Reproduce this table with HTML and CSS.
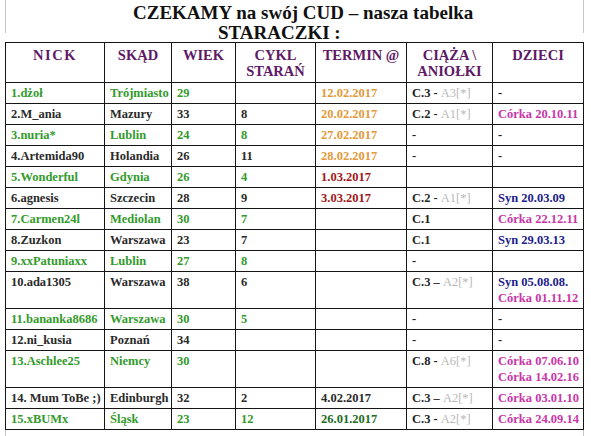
FILE: index.html
```html
<!DOCTYPE html>
<html lang="pl">
<head>
<meta charset="utf-8">
<title>CZEKAMY na swój CUD</title>
<link rel="stylesheet" href="styles.css">
</head>
<body>
<div class="page">
  <header class="title">
    <div class="title-line1">CZEKAMY na swój CUD – nasza tabelka</div>
    <div class="title-line2">STARACZKI :</div>
  </header>
  <table class="tab">
    <colgroup>
      <col class="c-nick"><col class="c-skad"><col class="c-wiek"><col class="c-cykl"><col class="c-termin"><col class="c-ciaza"><col class="c-dzieci">
    </colgroup>
    <thead>
      <tr>
        <th class="h-nick">NICK</th>
        <th>SKĄD</th>
        <th>WIEK</th>
        <th>CYKL<br>STARAŃ</th>
        <th>TERMIN @</th>
        <th>CIĄŻA \<br>ANIOŁKI</th>
        <th>DZIECI</th>
      </tr>
    </thead>
    <tbody>
      <tr class="g"><td>1.dżoł</td><td>Trójmiasto</td><td>29</td><td></td><td class="or">12.02.2017</td><td class="dk">C.3 - <span class="an">A3[*]</span></td><td class="dk">-</td></tr>
      <tr class="d"><td>2.M_ania</td><td>Mazury</td><td>33</td><td>8</td><td class="or">20.02.2017</td><td>C.2 - <span class="an">A1[*]</span></td><td class="pk">Córka 20.10.11</td></tr>
      <tr class="g"><td>3.nuria*</td><td>Lublin</td><td>24</td><td>8</td><td class="or">27.02.2017</td><td class="dk">-</td><td class="dk">-</td></tr>
      <tr class="d"><td>4.Artemida90</td><td>Holandia</td><td>26</td><td>11</td><td class="or">28.02.2017</td><td>-</td><td>-</td></tr>
      <tr class="g"><td>5.Wonderful</td><td>Gdynia</td><td>26</td><td>4</td><td class="rd">1.03.2017</td><td></td><td></td></tr>
      <tr class="d"><td>6.agnesis</td><td>Szczecin</td><td>28</td><td>9</td><td class="rd">3.03.2017</td><td>C.2 - <span class="an">A1[*]</span></td><td class="nv">Syn 20.03.09</td></tr>
      <tr class="g"><td>7.Carmen24l</td><td>Mediolan</td><td>30</td><td>7</td><td></td><td class="dk">C.1</td><td class="pk">Córka 22.12.11</td></tr>
      <tr class="d"><td>8.Zuzkon</td><td>Warszawa</td><td>23</td><td>7</td><td></td><td>C.1</td><td class="nv">Syn 29.03.13</td></tr>
      <tr class="g"><td>9.xxPatuniaxx</td><td>Lublin</td><td>27</td><td>8</td><td></td><td class="dk">-</td><td></td></tr>
      <tr class="d"><td>10.ada1305</td><td>Warszawa</td><td>38</td><td>6</td><td></td><td>C.3 – <span class="an">A2[*]</span></td><td><span class="nv">Syn 05.08.08.</span><br><span class="pk">Córka 01.11.12</span></td></tr>
      <tr class="g"><td>11.bananka8686</td><td>Warszawa</td><td>30</td><td>5</td><td></td><td class="dk">-</td><td class="dk">-</td></tr>
      <tr class="d"><td>12.ni_kusia</td><td>Poznań</td><td>34</td><td></td><td></td><td>-</td><td>-</td></tr>
      <tr class="g"><td>13.Aschlee25</td><td>Niemcy</td><td>30</td><td></td><td></td><td class="dk">C.8 - <span class="an">A6[*]</span></td><td class="pk">Córka 07.06.10<br>Córka 14.02.16</td></tr>
      <tr class="d"><td>14. Mum ToBe ;)</td><td>Edinburgh</td><td>32</td><td>2</td><td>4.02.2017</td><td>C.3 – <span class="an">A2[*]</span></td><td class="pk">Córka 03.01.10</td></tr>
      <tr class="g"><td>15.xBUMx</td><td>Śląsk</td><td>23</td><td>12</td><td class="dg">26.01.2017</td><td class="dk">C.3 - <span class="an">A2[*]</span></td><td class="pk">Córka 24.09.14</td></tr>
    </tbody>
  </table>
  <div class="foot"></div>
</div>
</body>
</html>
```
FILE: styles.css
```css
html, body {
  margin: 0;
  padding: 0;
  background: #ffffff;
}
body {
  font-family: "Liberation Serif", Tinos, "Times New Roman", "DejaVu Serif", serif;
  color: #2a2a2a;
}
.page {
  margin-left: 5px;
  width: 579px;
}
.title {
  height: 42px;
  box-sizing: border-box;
  padding-top: 3px;
  font-size: 19px;
  font-weight: bold;
  line-height: 20px;
  color: #111111;
  background:
    linear-gradient(#c8c8c8, #c8c8c8) left top / 1px 33px no-repeat,
    linear-gradient(#c8c8c8, #c8c8c8) right top / 1px 33px no-repeat;
  white-space: nowrap;
}
.title-line1 {
  padding-left: 128px;
}
.title-line2 {
  padding-left: 213px;
}
.tab {
  width: 579px;
  table-layout: fixed;
  border-collapse: collapse;
  font-family: "Liberation Serif", Tinos, "Times New Roman", "DejaVu Serif", serif;
  font-size: 12.5px;
  font-weight: bold;
  line-height: 16px;
}
.c-nick { width: 99px; }
.c-skad { width: 67px; }
.c-wiek { width: 64px; }
.c-cykl { width: 80px; }
.c-termin { width: 91px; }
.c-ciaza { width: 86px; }
.c-dzieci { width: 91px; }
.tab th, .tab td {
  border: 1px solid #151515;
  vertical-align: top;
  white-space: nowrap;
  overflow: hidden;
}
.tab th {
  padding: 4px 2px 3px;
  font-size: 14.5px;
  color: #5e1a66;
  text-align: center;
  line-height: 16px;
}
.h-nick {
  letter-spacing: 1.5px;
}
.tab td {
  padding: 2px 4px 2px 5px;
  text-align: left;
}
.g td { color: #339a2c; }
.d td { color: #2a2a2a; }
.tab td.or { color: #e39a3b; }
.tab td.rd { color: #a31818; }
.tab td.dg { color: #236b23; }
.tab td.dk { color: #1e1e1e; }
.tab td.pk, .pk { color: #c936a8; }
.tab td.nv, .nv { color: #1c1c8c; }
.an {
  color: #b8b8b8;
  font-weight: normal;
}
.foot {
  height: 6px;
  background:
    linear-gradient(#c8c8c8, #c8c8c8) left top / 1px 6px no-repeat,
    linear-gradient(#c8c8c8, #c8c8c8) right top / 1px 6px no-repeat;
}
```
